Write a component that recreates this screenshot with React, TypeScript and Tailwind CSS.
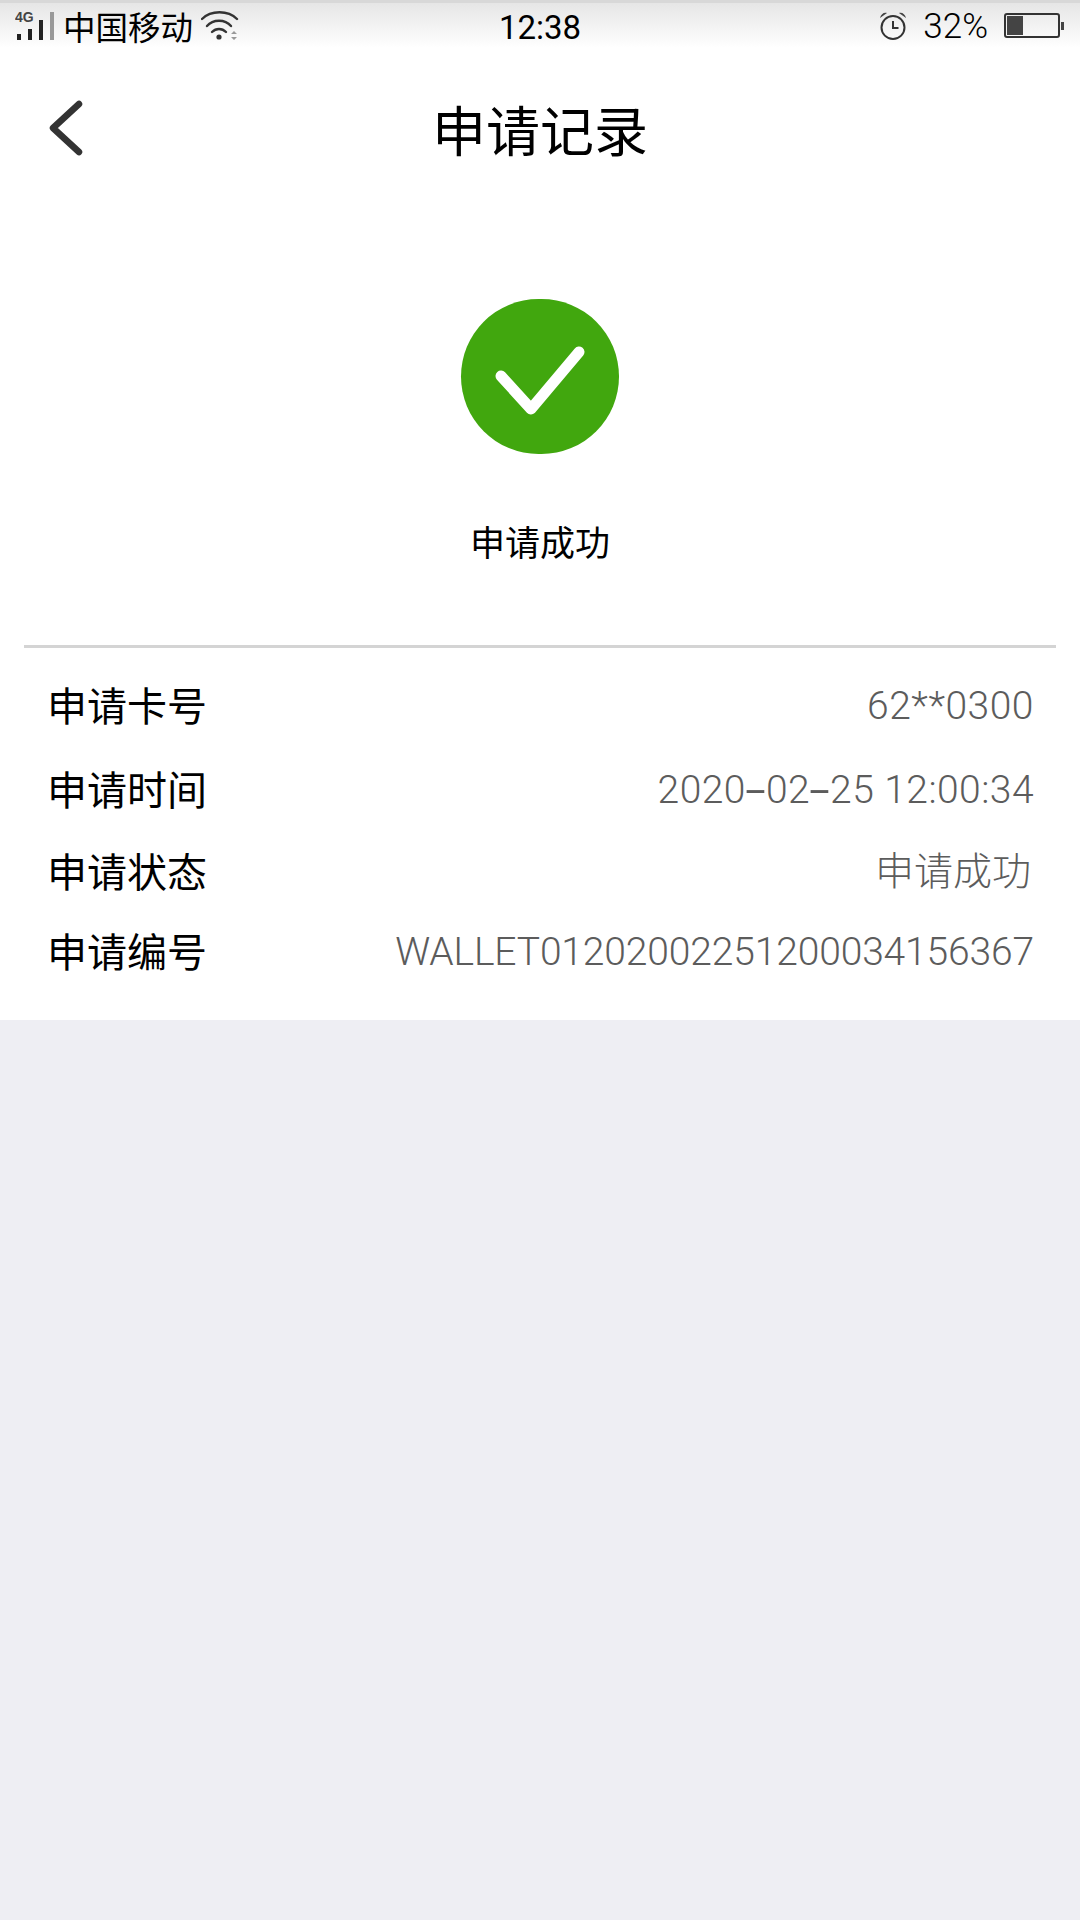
const cjk = "font-['Noto_Sans_CJK_SC','Noto_Sans',sans-serif]"

const rows = [
  { label: '申请卡号', value: '62**0300', rowClass: 'h-[84px] mt-[14px]', valueClass: 'tracking-[0.5px]' },
  { label: '申请时间', value: '2020-02-25 12:00:34', rowClass: 'h-[84px]', valueClass: 'tracking-[0.45px]' },
  { label: '申请状态', value: '申请成功', rowClass: 'h-[80px]', valueClass: 'mr-[3px]' },
  { label: '申请编号', value: 'WALLET01202002251200034156367', rowClass: 'h-[80px]', valueClass: 'tracking-[-0.15px]' },
]

// the date dashes are much wider in the picture than Roboto's hyphen
function DashedValue({ value }: { value: string }) {
  const parts = value.split('-')
  if (value.startsWith('WALLET') || parts.length === 1) return <>{value}</>
  return (
    <>
      {parts.map((part, i) => (
        <span key={i}>
          {i > 0 && <span className="inline-block w-[20px] scale-x-[1.9] text-center font-normal">-</span>}
          {part}
        </span>
      ))}
    </>
  )
}

function SignalIcon() {
  return (
    <svg width="42" height="32" viewBox="0 0 42 32" className="shrink-0">
      <text x="0" y="12" fontSize="14" fontWeight="700" fill="#444" fontFamily="Liberation Sans, sans-serif">4G</text>
      <rect x="2" y="24" width="4" height="6" fill="#222" />
      <rect x="13" y="19" width="4" height="11" fill="#222" />
      <rect x="24" y="10" width="4" height="20" fill="#222" />
      <rect x="35" y="2" width="4" height="28" fill="#999" />
    </svg>
  )
}

function WifiIcon() {
  return (
    <svg width="38" height="32" viewBox="0 0 38 32" className="shrink-0">
      <g fill="none" stroke="#333" strokeWidth="2.4" strokeLinecap="round">
        <path d="M1 9 C10 0 27 0 36 9" />
        <path d="M6 16 C12 9 24 9 30 16" />
        <path d="M11 22 C15 18 21 18 25 22" />
      </g>
      <circle cx="18" cy="27" r="2.6" fill="#333" />
      <path d="M30 24 L33 21 L36 24 Z M30 27 L36 27 L33 30 Z" fill="#999" />
    </svg>
  )
}

function AlarmIcon() {
  return (
    <svg width="28" height="28" viewBox="0 0 28 28" className="shrink-0">
      <circle cx="14" cy="15.5" r="11.5" fill="none" stroke="#333" strokeWidth="2" />
      <path d="M14 9 V16 H19.5" fill="none" stroke="#333" strokeWidth="2" />
      <path d="M1 6 C2 2 5 0 8 1 Z M27 6 C26 2 23 0 20 1 Z" fill="#444" />
    </svg>
  )
}

function Battery() {
  return (
    <div className="flex items-center">
      <div className="flex h-[25px] w-[56px] rounded-[3px] border-2 border-[#333] p-[1px]">
        <div className="w-[16px] bg-[#444]" />
      </div>
      <div className="ml-[1px] h-[8px] w-[3px] bg-[#444]" />
    </div>
  )
}

export default function App() {
  return (
    <div className={`flex h-[1920px] w-[1080px] flex-col bg-[#eeeef3] ${cjk}`}>
      <div className="h-[1020px] bg-white">
        <div className="grid h-[48px] grid-cols-[1fr_auto_1fr] items-center border-t-[3px] border-[#d8d8d8] bg-gradient-to-b from-[#e6e6e6] to-white text-black">
          <div className="flex items-center pl-[15px]">
            <SignalIcon />
            <span className="ml-[6px] text-[32.5px] leading-[40px]">中国移动</span>
            <div className="ml-[8px]"><WifiIcon /></div>
          </div>
          <span className="pt-[4px] text-[33px] leading-[40px] font-['Roboto',sans-serif]">12:38</span>
          <div className="flex items-center justify-end pr-[16px]">
            <AlarmIcon />
            <span className="ml-[16px] pt-[3px] text-[35px] leading-[40px] font-['Roboto',sans-serif] font-light">32%</span>
            <div className="ml-[16px]"><Battery /></div>
          </div>
        </div>

        <div className="grid h-[166px] grid-cols-[1fr_auto_1fr] items-center">
          <div className="pl-[48px]">
            <svg width="36" height="56" viewBox="0 0 36 56" className="-mt-[6px]">
              <path d="M31 4 L5 28 L31 52" fill="none" stroke="#333" strokeWidth="6.5" strokeLinecap="round" strokeLinejoin="round" />
            </svg>
          </div>
          <h1 className="-mt-[4px] text-[54px] leading-[64px] font-normal text-black">申请记录</h1>
          <div />
        </div>

        <div className="flex flex-col items-center pt-[85px]">
          <div className="flex h-[155px] w-[158px] items-center justify-center rounded-full bg-[#41a70e]">
            <svg width="158" height="155" viewBox="0 0 158 155">
              <path d="M40 77 L70 110 L118 53" fill="none" stroke="white" strokeWidth="11" strokeLinecap="round" strokeLinejoin="round" />
            </svg>
          </div>
          <p className="mt-[65px] text-[35px] leading-[44px] text-black">申请成功</p>
        </div>

        <div className="mx-[24px] mt-[82px] h-[3px] bg-[#d4d4d4]" />

        <div className="pl-[47px] pr-[46px]">
          {rows.map((row) => (
            <div key={row.label} className={`flex items-center justify-between ${row.rowClass}`}>
              <span className="text-[40px] leading-[48px] text-black">{row.label}</span>
              <span className={`pt-[4px] text-[39px] leading-[48px] font-light text-[#5c5c5c] font-['Roboto','Noto_Sans_CJK_SC',sans-serif] ${row.valueClass}`}>
                <DashedValue value={row.value} />
              </span>
            </div>
          ))}
        </div>
      </div>
    </div>
  )
}
